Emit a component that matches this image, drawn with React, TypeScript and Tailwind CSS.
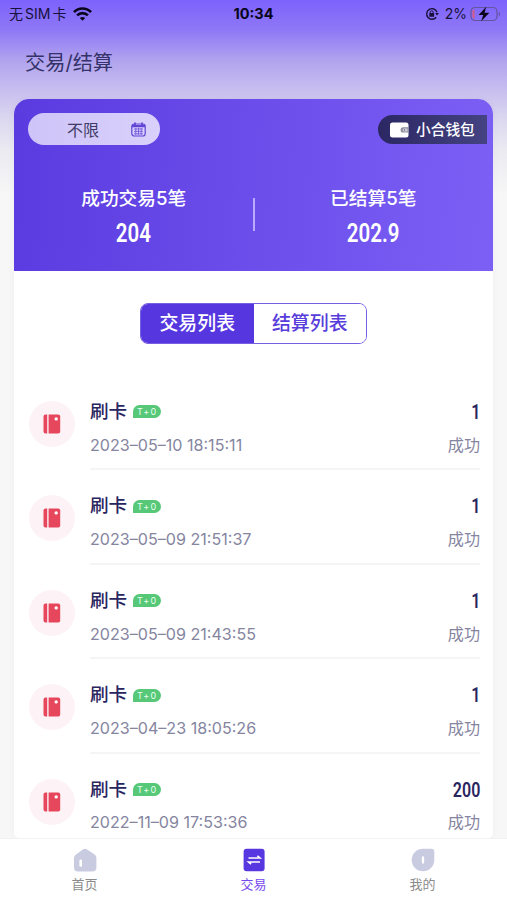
import React from 'react';

const records = [
  { time: '2023–05–10 18:15:11', amount: '1' },
  { time: '2023–05–09 21:51:37', amount: '1' },
  { time: '2023–05–09 21:43:55', amount: '1' },
  { time: '2023–04–23 18:05:26', amount: '1' },
  { time: '2022–11–09 17:53:36', amount: '200' },
];

const StatusBar = () => (
  <div className="relative flex h-7 items-center justify-between pl-[9px] pr-[5px] text-[#17123a]">
    <div className="flex items-center">
      <div className="flex gap-[2px] text-[14px] leading-7">
        <span>无</span>
        <span>SIM</span>
        <span>卡</span>
      </div>
      <svg className="ml-[7px] h-[14px] w-[19px]" viewBox="0 0 19 14" fill="none" stroke="#09061c" strokeWidth="2.7">
        <path d="M1 5.1C5.8.3 13.2.3 18 5.1" />
        <path d="M4.1 8.4c3-3 7.8-3 10.8 0" />
        <path d="M6.8 11 9.5 13.8 12.2 11c-1.5-1.4-3.9-1.4-5.4 0Z" fill="#09061c" stroke="none" />
      </svg>
    </div>
    <div className="absolute left-1/2 top-0 -translate-x-1/2 text-[14.5px] font-bold leading-7 text-[#09061c]">10:34</div>
    <div className="flex items-center">
      <svg className="h-[14px] w-[14px]" viewBox="0 0 14 14" fill="none" stroke="#17123a" strokeWidth="1.4">
        <path d="M11.2 10.2A5.3 5.3 0 1 1 12 5.2" />
        <path d="m10.2 6 1.8 2.4L14 6Z" fill="#17123a" stroke="none" />
        <path d="M5.2 6.5V5.3a1.5 1.5 0 0 1 3 0v1.2" strokeWidth="1" />
        <rect x="4.3" y="6" width="4.8" height="3.8" rx=".5" fill="#17123a" stroke="none" />
      </svg>
      <span className="ml-[6px] text-[14px] leading-7">2%</span>
      <svg className="ml-[3px] h-[16px] w-[32px]" viewBox="0 0 32 16">
        <rect x="1" y="1.5" width="26" height="13" rx="4" fill="none" stroke="#65549e" strokeWidth="1.2" />
        <path d="M28.8 6v4.2c1.8-.7 1.8-3.5 0-4.2Z" fill="#65549e" />
        <path d="M4.5 3.5v9c-1.2 0-2-.8-2-2v-5c0-1.2.8-2 2-2Z" fill="#d65a83" />
        <path d="M16.2.8 8.6 9h4.6l-2 6.2 8.2-8.4h-4.8Z" fill="#09061c" />
      </svg>
    </div>
  </div>
);

const CalendarIcon = () => (
  <svg className="h-[15px] w-[15px]" viewBox="0 0 15 15" fill="none" stroke="#6144d5">
    <rect x=".8" y="2" width="13.4" height="12" rx="2.5" strokeWidth="1.2" />
    <path d="M1 4.2h13" strokeWidth="2.2" />
    <path d="M4 .5v3M11 .5v3" strokeWidth="1.7" />
    <path d="M3 7h9M3 9.4h9M3 11.8h9M4.8 6v7M7.5 6v7M10.2 6v7" strokeWidth=".7" />
  </svg>
);

const WalletIcon = () => (
  <svg className="h-[16px] w-[19px]" viewBox="0 0 19 16">
    <rect x="0" y=".5" width="18.5" height="15" rx="2.5" fill="#fff" />
    <path d="M18.6 5.2h-5.3a2.7 2.7 0 0 0 0 5.4h5.3Z" fill="#8b8b9a" />
    <path d="M17.5 6.5h-3.8a1.5 1.5 0 0 0 0 2.9h3.8Z" fill="#d5d4df" />
    <circle cx="14.5" cy="8" r=".8" fill="#666579" />
  </svg>
);

const Stat = ({ label, value }: { label: string; value: string }) => (
  <div className="flex w-1/2 flex-col items-center text-white">
    <div className="text-[18.7px] font-medium leading-[26px]">{label}</div>
    <div className="mt-[7px] scale-x-[.82] font-['Roboto'] text-[25px] font-semibold leading-[30px]">{value}</div>
  </div>
);

const Record = ({ time, amount }: { time: string; amount: string }) => (
  <div className="flex h-[94.4px] shrink-0 pl-[15px] pr-[13px]">
    <div className="mt-[25px] flex h-[46px] w-[46px] shrink-0 items-center justify-center rounded-full bg-[#fdf2f5]">
      <svg className="h-5 w-[18px]" viewBox="0 0 18 20">
        <path d="M2.5.4H4.2v19.2H2.5A2 2 0 0 1 .5 17.6V2.4a2 2 0 0 1 2-2Z" fill="#e7475c" />
        <path d="M5.6.4h9.6a2 2 0 0 1 2 2v15.2a2 2 0 0 1-2 2H5.6Z" fill="#e7475c" />
        <circle cx="13.2" cy="4.9" r="1.7" fill="#fff" />
      </svg>
    </div>
    <div className="ml-[15px] flex flex-1 flex-col border-b-2 border-[#f5f5f6] pt-[22px]">
      <div className="flex h-[28px] items-center justify-between text-[#29255f]">
        <div className="flex items-center">
          <span className="text-[18.6px] font-medium">刷卡</span>
          <span className="ml-[6px] flex h-[13px] w-[28px] items-center justify-center rounded-[7px] rounded-bl-none bg-[#56c878] text-[9px] leading-none tracking-[1.2px] text-[#e9fff0]">T+0</span>
        </div>
        <span className="origin-right scale-x-[.8] font-['Roboto'] text-[20px] font-semibold">{amount}</span>
      </div>
      <div className="mt-[6px] flex h-[26px] items-center justify-between text-[16.1px] text-[#85859f]">
        <span>{time}</span>
        <span>成功</span>
      </div>
    </div>
  </div>
);

const TabBar = () => (
  <div className="relative z-10 flex h-[62px] shrink-0 border-t border-[#f2f2f2] bg-white text-[13px] text-[#8b8b8b]">
    <div className="flex w-1/3 flex-col items-center pt-[9px]">
      <svg className="h-6 w-6" viewBox="0 0 24 24">
        <path d="M10.2 1.3Q12 0 13.8 1.3l7.8 5.3Q23.4 8 23.4 10v9.5q0 4-4 4H5q-4 0-4-4V10q0-2 1.7-3.3Z" fill="#c9cce1" />
        <path d="M7.7 12.8v4.7" stroke="#fff" strokeWidth="2.6" strokeLinecap="round" />
      </svg>
      <span className="mt-[3px] leading-[18px]">首页</span>
    </div>
    <div className="flex w-1/3 flex-col items-center pt-[9px] text-[#7549ef]">
      <svg className="h-6 w-6" viewBox="0 0 24 24">
        <rect x="1.6" y=".7" width="21" height="22.6" rx="3" fill="#5737df" />
        <path d="M6.5 10H18l-2.6-2.2M18 14H6.5l2.6 2.2" fill="none" stroke="#fff" strokeWidth="1.6" />
      </svg>
      <span className="mt-[3px] leading-[18px]">交易</span>
    </div>
    <div className="flex w-1/3 flex-col items-center pt-[9px]">
      <svg className="h-6 w-6" viewBox="0 0 24 24">
        <path d="M12 .7h8.3q3 0 3 3V12A11.3 11.3 0 1 1 12 .7Z" fill="#c9cce1" />
        <path d="M12 9.5v5" stroke="#fff" strokeWidth="2.3" strokeLinecap="round" />
      </svg>
      <span className="mt-[3px] leading-[18px]">我的</span>
    </div>
  </div>
);

export default function App() {
  return (
    <div className="flex h-[900px] w-[507px] flex-col overflow-hidden bg-[#f7f7f7] bg-[linear-gradient(#7d62fc_0px,#8f78f6_30px,#b0a3ee_60px,#c8beef_90px,#dcd8f0_120px,#ebeaf1_150px,#f7f7f7_195px)] font-['Inter','Noto_Sans_CJK_SC',sans-serif]">
      <StatusBar />
      <h1 className="ml-[25px] h-[71px] pt-[21px] text-[20.2px] leading-[28px] text-[#353269]">交易/结算</h1>

      <div className="mx-[14px] flex min-h-0 flex-1 flex-col overflow-hidden rounded-t-[15px] rounded-b-[5px] bg-white shadow-[0_0_8px_rgba(0,0,0,0.04)]">
        <div className="h-[172px] shrink-0 bg-[linear-gradient(95deg,#5a3be0,#7c60f5)]">
          <div className="flex items-start justify-between pl-[14px] pr-[6px] pt-[14px]">
            <div className="flex h-[32px] w-[132px] items-center justify-between rounded-full bg-[linear-gradient(90deg,#cec4f8,#d9d0fc)] pl-[39px] pr-[14px]">
              <span className="pt-px text-[16px] text-[#3f3b66]">不限</span>
              <CalendarIcon />
            </div>
            <div className="mt-[2px] flex h-[29px] w-[109px] items-center rounded-l-full bg-[linear-gradient(90deg,#2b2763,#454383)] pl-[12px]">
              <WalletIcon />
              <span className="ml-[7px] pt-px text-[14.7px] font-medium text-white">小合钱包</span>
            </div>
          </div>
          <div className="relative mt-[41px] flex">
            <Stat label="成功交易5笔" value="204" />
            <div className="absolute left-1/2 top-[12px] h-[33px] w-[2px] -translate-x-1/2 bg-[#b8aaf8]" />
            <Stat label="已结算5笔" value="202.9" />
          </div>
        </div>

        <div className="mx-auto mt-[32px] flex h-[41px] w-[227px] shrink-0 overflow-hidden rounded-[8px] border border-[#775fe2] text-[18.9px] font-medium">
          <button className="w-1/2 bg-[#5637df] pt-[2px] text-white">交易列表</button>
          <button className="w-1/2 bg-white pt-[2px] text-[#593ddb]">结算列表</button>
        </div>

        <div className="mt-[32px] min-h-0 flex-1 overflow-hidden">
          {records.map((record) => (
            <Record key={record.time} {...record} />
          ))}
        </div>
      </div>
      <TabBar />
    </div>
  );
}
